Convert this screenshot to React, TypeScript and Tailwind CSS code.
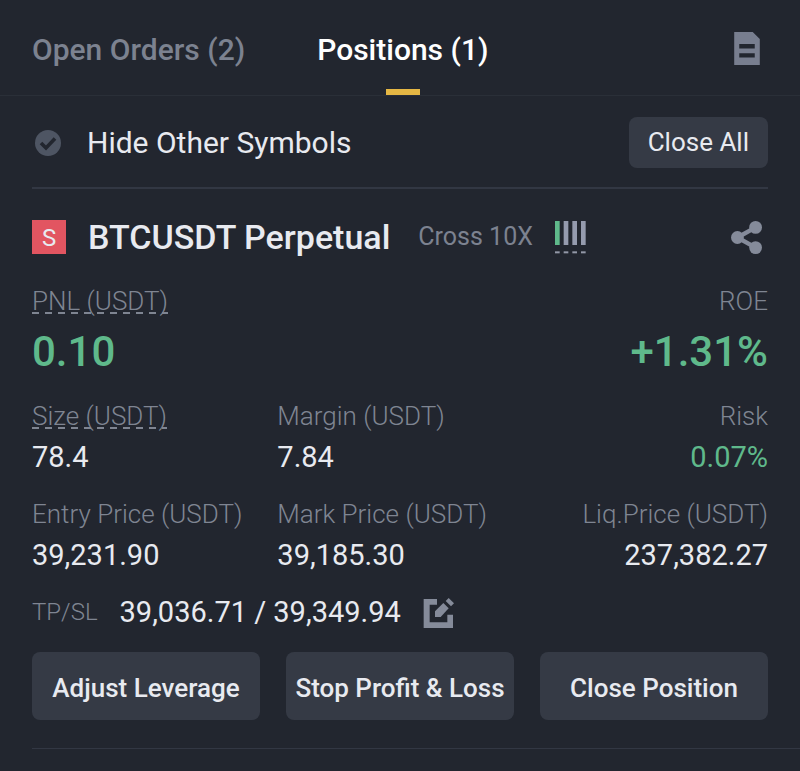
import { useState } from "react";
import clsx from "clsx";

const tabs = [
  { id: "orders", label: "Open Orders", count: 2 },
  { id: "positions", label: "Positions", count: 1 },
];

const stats = [
  { label: "Size (USDT)", value: "78.4", hint: true },
  { label: "Margin (USDT)", value: "7.84" },
  { label: "Risk", value: "0.07%", green: true },
  { label: "Entry Price (USDT)", value: "39,231.90" },
  { label: "Mark Price (USDT)", value: "39,185.30" },
  { label: "Liq.Price (USDT)", value: "237,382.27" },
];

const actions = ["Adjust Leverage", "Stop Profit & Loss", "Close Position"];

const DocumentIcon = () => (
  <svg width="26" height="33" viewBox="0 0 76 98" fill="#787e8f" aria-hidden="true">
    <path
      fillRule="evenodd"
      d="M0 0h55l21 21v77H0V0Zm15 36v13h46V36H15Zm0 27v13h46V63H15Z"
    />
  </svg>
);

const ShareIcon = () => (
  <svg width="31" height="33" viewBox="0 0 92 98" aria-hidden="true">
    <path d="M73 19 19 49l54 30" fill="none" stroke="#858b9a" strokeWidth="13" />
    <g fill="#858b9a">
      <circle cx="19" cy="49" r="19" />
      <circle cx="73" cy="19" r="19" />
      <circle cx="73" cy="79" r="19" />
    </g>
  </svg>
);

const EditIcon = () => (
  <svg width="31" height="31" viewBox="0 0 93 93" fill="#858b9a" aria-hidden="true">
    <path d="M2 6h40v17H20v53h53V53h17v40H2V6Z" />
    <path d="m36 43 25-25 16 16-24 26H36V43Z" />
    <path d="m68 12 9-9 16 16-9 9-16-16Z" />
  </svg>
);

// ADL indicator, first bar is lit
const AdlBars = () => (
  <svg width="31" height="33" viewBox="0 0 93 99" role="img" aria-label="ADL level 1">
    {[0, 26, 52, 78].map((x) => (
      <g key={x}>
        <rect x={x} y="0" width="14" height="72" fill={x === 0 ? "#5fb98b" : "#959bae"} />
        <rect x={x} y="91" width="14" height="6" fill="#9398a8" />
      </g>
    ))}
  </svg>
);

const Label = ({ text, hint }: { text: string; hint?: boolean }) => (
  <span
    className={clsx(
      "inline-block text-[26px] leading-8 font-light text-[#7f8592]",
      hint &&
        "bg-[repeating-linear-gradient(90deg,#7f8592_0_7px,transparent_7px_13px)] bg-[length:100%_2px] bg-[position:0_27px] bg-no-repeat"
    )}
  >
    {text}
  </span>
);

export default function App() {
  const [active, setActive] = useState("positions");
  const [hideOthers, setHideOthers] = useState(false);

  return (
    <div className="min-h-screen bg-[#22262f] font-['Roboto','Liberation_Sans',sans-serif] text-[#e8eaf0]">
      {/* Tabs */}
      <header className="flex h-24 items-stretch justify-between border-b border-[#2a2f38] px-8">
        <div role="tablist" className="flex gap-[72px]">
          {tabs.map((tab) => (
            <button
              key={tab.id}
              role="tab"
              aria-selected={active === tab.id}
              onClick={() => setActive(tab.id)}
              className={clsx(
                "relative pt-1 text-[30px] font-medium",
                active === tab.id ? "text-white" : "text-[#7c8290]"
              )}
            >
              {tab.label} ({tab.count})
              {active === tab.id && (
                <span className="absolute bottom-0 left-1/2 h-1.5 w-[34px] -translate-x-1/2 bg-[#e5b744]" />
              )}
            </button>
          ))}
        </div>
        <button aria-label="Order history" className="mr-2 pt-0.5">
          <DocumentIcon />
        </button>
      </header>

      {/* Filter */}
      <div className="mx-8 flex items-center justify-between border-b-2 border-[#323743] pt-[21px] pb-[19px]">
        <label className="flex items-center text-[30px] leading-10">
          <span className="relative mr-[26px] ml-[3px] size-[26px]">
            <input
              type="checkbox"
              checked={hideOthers}
              onChange={(e) => setHideOthers(e.target.checked)}
              className="block size-[26px] appearance-none rounded-full bg-[#4e5563] checked:bg-[#e5b744]"
            />
            <svg
              className="pointer-events-none absolute inset-0"
              viewBox="0 0 26 26"
              fill="none"
              stroke="#22262f"
              strokeWidth="3.6"
              aria-hidden="true"
            >
              <path d="m6 13 5 5 9-9.5" />
            </svg>
          </span>
          Hide Other Symbols
        </label>
        <button className="rounded-lg bg-[#353a45] px-[19px] text-[26px] leading-[51px]">
          Close All
        </button>
      </div>

      {/* Position */}
      <section className="px-8 pt-7">
        <div className="flex items-center">
          <span className="mr-[22px] size-[34px] bg-[#e25561] text-center text-2xl leading-9">S</span>
          <h2 className="text-[34px] leading-10 font-medium">BTCUSDT Perpetual</h2>
          <span className="mr-[22px] ml-7 text-[25px] leading-8 text-[#7c8290]">Cross 10X</span>
          <AdlBars />
          <button aria-label="Share position" className="mr-1.5 ml-auto">
            <ShareIcon />
          </button>
        </div>

        <dl className="mt-7 flex justify-between">
          <div>
            <dt className="h-8">
              <Label text="PNL (USDT)" hint />
            </dt>
            <dd className="mt-[11px] text-[42px] leading-[48px] font-medium text-[#5fb98b]">0.10</dd>
          </div>
          <div className="text-right">
            <dt className="h-8">
              <Label text="ROE" />
            </dt>
            <dd className="mt-[11px] text-[42px] leading-[48px] font-medium text-[#5fb98b]">+1.31%</dd>
          </div>
        </dl>

        <dl className="mt-6 grid grid-cols-3 gap-y-[23px]">
          {stats.map((stat, i) => (
            <div key={stat.label} className={clsx(i % 3 === 2 && "text-right")}>
              <dt className="h-8">
                <Label text={stat.label} hint={stat.hint} />
              </dt>
              <dd className={clsx("mt-[7px] text-[29px] leading-9", stat.green && "text-[#5fb98b]")}>
                {stat.value}
              </dd>
            </div>
          ))}
        </dl>

        <div className="mt-[21px] flex items-center">
          <span className="text-2xl leading-8 font-light text-[#7f8592]">TP/SL</span>
          <span className="mr-[22px] ml-[22px] text-[29px] leading-9">39,036.71 / 39,349.94</span>
          <button aria-label="Edit TP/SL">
            <EditIcon />
          </button>
        </div>

        <div className="mt-[22px] grid grid-cols-3 gap-[26px]">
          {actions.map((action) => (
            <button
              key={action}
              className="h-[68px] rounded-lg bg-[#353a45] pt-1 text-[26px] font-medium whitespace-nowrap"
            >
              {action}
            </button>
          ))}
        </div>
      </section>

      <hr className="mt-7 ml-8 border-[#323743]" />
    </div>
  );
}
